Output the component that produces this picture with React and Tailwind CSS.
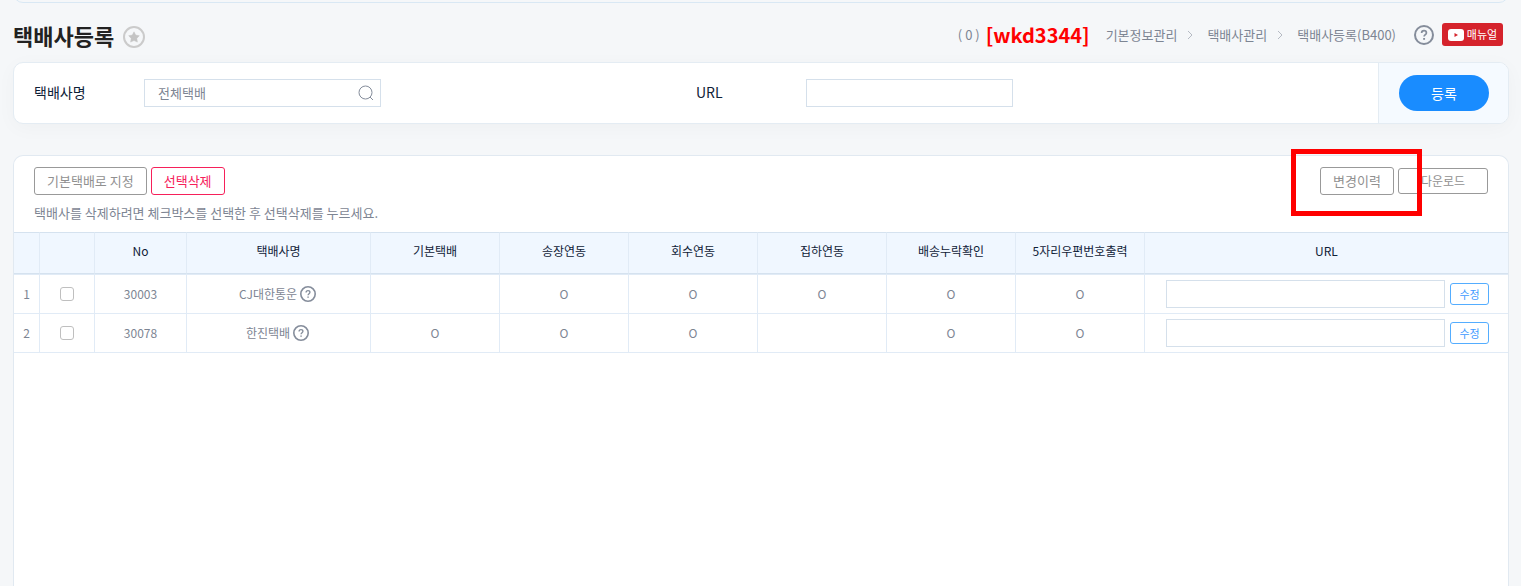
import React, { useState } from 'react';

const carriers = [
    { no: '30003', name: 'CJ대한통운', flags: ['', 'O', 'O', 'O', 'O', 'O'] },
    { no: '30078', name: '한진택배', flags: ['O', 'O', 'O', '', 'O', 'O'] },
];

const flagHeaders = ['기본택배', '송장연동', '회수연동', '집하연동', '배송누락확인', '5자리우편번호출력'];

const HelpIcon = ({ className }) => (
    <svg viewBox="0 0 20 20" fill="none" stroke="#858d9b" strokeWidth="2" className={className} aria-hidden="true">
        <circle cx="10" cy="10" r="9" />
        <path d="M7.6 8.1c0-1.5 1-2.4 2.4-2.4s2.4.9 2.4 2.2c0 1.7-2.3 1.8-2.3 3.7" strokeWidth="1.7" />
        <path d="M10.1 13v1.8" strokeWidth="1.9" />
    </svg>
);

const Chevron = () => (
    <svg viewBox="0 0 6 10" fill="none" stroke="#b5bac3" className="h-[10px] w-[6px]" aria-hidden="true">
        <path d="M1 1l4 4-4 4" />
    </svg>
);

const PageHeader = () => (
    <header className="flex h-[59px] items-center justify-between pb-[2px] pr-[6px] pt-[9px]">
        <div className="flex items-center gap-[9px]">
            <h1 className="pb-[2px] text-[22px] font-bold leading-[30px] text-[#222]">택배사등록</h1>
            <button type="button" aria-label="즐겨찾기" className="mt-[2px]">
                <svg viewBox="0 0 22 22" className="h-[22px] w-[22px]">
                    <circle cx="11" cy="11" r="10" fill="none" stroke="#cbcbcb" strokeWidth="2" />
                    <path d="M11 5.8l1.7 3.3 3.6.6-2.5 2.7.6 3.7-3.4-1.6-3.4 1.6.6-3.7-2.5-2.7 3.6-.6z" fill="#c4c4c4" stroke="#c4c4c4" strokeWidth=".5" />
                </svg>
            </button>
        </div>
        <div className="mb-[3px] flex items-center text-[13px] text-[#7d8593]">
            <span>( 0 )</span>
            <strong className="ml-[6px] text-[20px] leading-[28px] text-[#ff0000]">[wkd3344]</strong>
            <nav className="ml-4 flex items-center">
                <a href="#basic">기본정보관리</a>
                <span className="ml-[10px] mr-[14px]"><Chevron /></span>
                <a href="#carrier">택배사관리</a>
                <span className="ml-[10px] mr-[14px]"><Chevron /></span>
                <a href="#b400">택배사등록(B400)</a>
            </nav>
            <button type="button" aria-label="도움말" className="ml-[18px]">
                <HelpIcon className="h-[20px] w-[20px]" />
            </button>
            <button type="button" className="ml-2 flex h-[23px] w-[61px] items-center justify-center gap-[3px] rounded-[3px] bg-[#d5232c] text-[11px] text-white">
                <svg viewBox="0 0 16 12" className="h-[12px] w-[16px]" aria-hidden="true">
                    <rect width="16" height="12" rx="3" fill="#fff" />
                    <path d="M6.5 4v4l3.5-2z" fill="#d5232c" />
                </svg>
                매뉴얼
            </button>
        </div>
    </header>
);

const SearchPanel = () => {
    const [name, setName] = useState('전체택배');

    return (
        <form className="flex overflow-hidden rounded-[10px] border border-[#e4ecf3] bg-white shadow-[0_4px_20px_rgba(0,0,0,0.03)]">
            <div className="grid flex-1 grid-cols-2 items-center px-5 text-[14px] text-[#0f2137]">
                <div className="flex items-center">
                    <label htmlFor="carrier-name" className="w-[110px] pb-[2px]">택배사명</label>
                    <div className="flex h-[28px] w-[237px] items-center border border-[#d5e0eb]">
                        <input
                            id="carrier-name"
                            value={name}
                            onChange={(e) => setName(e.target.value)}
                            className="min-w-0 flex-1 pl-[13px] text-[13px] text-[#7d8593] outline-none"
                        />
                        <button type="button" aria-label="검색" className="mr-[6px]">
                            <svg viewBox="0 0 16 16" fill="none" stroke="#858d9b" className="h-[16px] w-[16px]">
                                <circle cx="7.5" cy="7.5" r="6.5" />
                                <path d="M12 12l3 3" />
                            </svg>
                        </button>
                    </div>
                </div>
                <div className="flex items-center">
                    <label htmlFor="carrier-url" className="w-[110px] pb-[2px]">URL</label>
                    <input id="carrier-url" className="h-[28px] w-[207px] border border-[#d5e0eb] px-2 text-[13px] outline-none" />
                </div>
            </div>
            <div className="border-l border-[#e4ecf3] bg-[#f5faff] py-3 pl-5 pr-[19px]">
                <button type="button" className="h-[36px] w-[90px] rounded-full bg-[#198cff] text-[14px] text-white">등록</button>
            </div>
        </form>
    );
};

const Toolbar = () => (
    <div className="flex items-start justify-between px-5 pt-[11px] text-[13px]">
        <div>
            <div className="flex gap-1">
                <button type="button" className="h-[28px] rounded-[3px] border border-[#999] px-3 text-[#909090]">기본택배로 지정</button>
                <button type="button" className="h-[28px] w-[74px] rounded-[3px] border border-[#f6205a] text-[#f6205a]">선택삭제</button>
            </div>
            <p className="mt-2 pb-[9px] leading-[20px] text-[#7d8593]">택배사를 삭제하려면 체크박스를 선택한 후 선택삭제를 누르세요.</p>
        </div>
        <div className="flex items-center gap-1">
            <div className="relative">
                <button type="button" className="h-[28px] w-[74px] rounded-[3px] border border-[#999] text-[#909090]">변경이력</button>
                {/* highlight around the history button */}
                <div className="pointer-events-none absolute -left-[29px] -top-[18px] z-10 h-[67px] w-[131px] border-5 border-[#ff0000]" />
            </div>
            <button type="button" className="h-[26px] w-[90px] rounded-[3px] border border-[#999] text-[12px] text-[#909090]">다운로드</button>
        </div>
    </div>
);

const CarrierTable = () => (
    <table className="w-full table-fixed border-separate border-spacing-0 text-center text-[12px] text-[#7d8593]">
        <colgroup>
            <col className="w-[26px]" />
            <col className="w-[55px]" />
            <col className="w-[92px]" />
            <col className="w-[184px]" />
            {flagHeaders.map((title) => <col key={title} className="w-[129px]" />)}
            <col />
        </colgroup>
        <thead>
            <tr className="h-[42px] bg-[#f0f7ff] text-[#0f2137] *:border-y *:border-r *:border-y-[#d5e2ef] *:border-r-[#e1ebf6] *:p-0 *:pb-[5px] *:font-normal">
                <th />
                <th />
                <th>No</th>
                <th>택배사명</th>
                {flagHeaders.map((title) => <th key={title} className="whitespace-nowrap">{title}</th>)}
                <th className="border-r-0!">URL</th>
            </tr>
        </thead>
        <tbody>
            {carriers.map((row, i) => (
                <tr key={row.no} className="h-[39px] first:h-[40px] *:border-b *:border-r *:border-[#e1ebf6] *:p-0 first:*:border-t">
                    <td>{i + 1}</td>
                    <td>
                        <input
                            type="checkbox"
                            aria-label={`${row.name} 선택`}
                            className="mx-auto block h-[14px] w-[14px] appearance-none rounded-[3px] border border-[#bfbfbf] bg-white checked:bg-[#198cff]"
                        />
                    </td>
                    <td>{row.no}</td>
                    <td>
                        <div className="flex items-center justify-center gap-[3px] pr-[2px]">
                            {row.name}
                            <button type="button" aria-label={`${row.name} 도움말`}>
                                <HelpIcon className="h-[16px] w-[16px]" />
                            </button>
                        </div>
                    </td>
                    {row.flags.map((flag, j) => <td key={flagHeaders[j]}>{flag}</td>)}
                    <td className="border-r-0!">
                        <div className="flex items-center gap-[5px] pl-[21px] pr-[19px]">
                            <input aria-label={`${row.name} URL`} className="h-[28px] min-w-0 flex-1 border border-[#d5e0eb] px-2 outline-none" />
                            <button type="button" className="h-[22px] w-[39px] rounded-[3px] border border-[#54adff] text-[11px] text-[#3d9aff]">수정</button>
                        </div>
                    </td>
                </tr>
            ))}
        </tbody>
    </table>
);

const App = () => (
    <div className="flex min-h-screen flex-col bg-[#f5f7f9] pl-[13px] pr-[12px] font-['Noto_Sans_CJK_KR','Noto_Sans',sans-serif]">
        <div className="flex h-[3px] items-end overflow-hidden">
            <div className="h-6 flex-1 rounded-b-[10px] border border-[#d9e8f4]" />
        </div>
        <PageHeader />
        <SearchPanel />
        <main className="mt-[31px] flex-1 rounded-t-[10px] border border-b-0 border-[#e1e9f1] bg-white">
            <Toolbar />
            <CarrierTable />
        </main>
    </div>
);

export default App;
